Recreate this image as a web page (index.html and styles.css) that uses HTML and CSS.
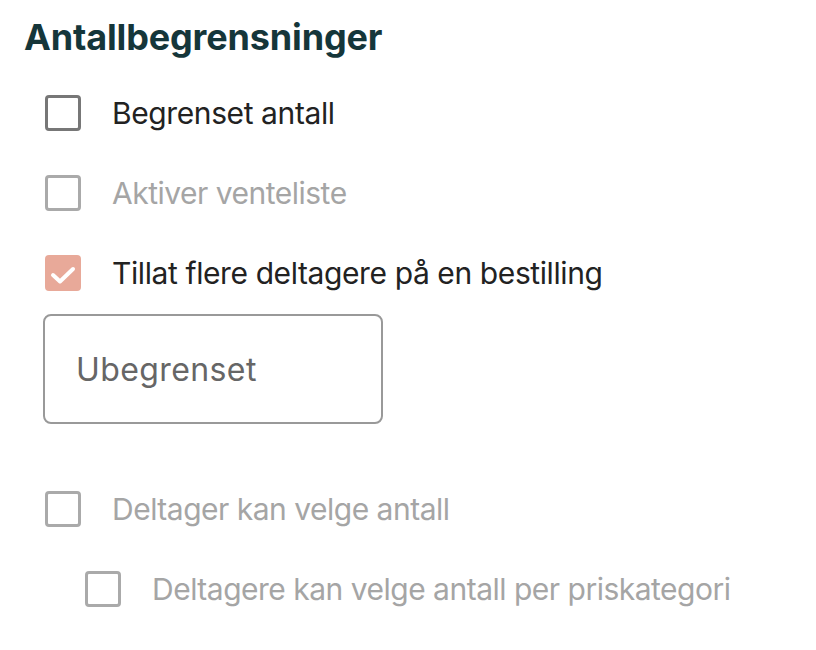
FILE: index.html
```html
<!DOCTYPE html>
<html lang="no">
  <head>
    <meta name="viewport" content="width=device-width, initial-scale=1" />
    <title>Antallbegrensninger</title>
    <link rel="stylesheet" href="styles.css">
  </head>
  <body>
    <section class="limits">
      <h2 class="limits-title">Antallbegrensninger</h2>

      <label class="check-row">
        <span class="check-box"></span>
        <span class="check-label">Begrenset antall</span>
      </label>

      <label class="check-row is-disabled">
        <span class="check-box"></span>
        <span class="check-label">Aktiver venteliste</span>
      </label>

      <label class="check-row">
        <span class="check-box is-checked">
          <svg viewBox="0 0 36 36" width="36" height="36">
            <path d="M8 20l7 6.5 13-12.5" fill="none" stroke="#fff" stroke-width="4" stroke-linecap="round" stroke-linejoin="round"/>
          </svg>
        </span>
        <span class="check-label">Tillat flere deltagere på en bestilling</span>
      </label>

      <div class="amount-field">
        <input class="amount-input" type="text" placeholder="Ubegrenset">
      </div>

      <label class="check-row is-disabled">
        <span class="check-box"></span>
        <span class="check-label">Deltager kan velge antall</span>
      </label>

      <label class="check-row is-disabled is-nested">
        <span class="check-box"></span>
        <span class="check-label">Deltagere kan velge antall per priskategori</span>
      </label>
    </section>
  </body>
</html>
```
FILE: styles.css
```css
body {
    margin: 0;
    font-family: Inter, "Noto Sans", sans-serif;
    background: #fff;
}
.limits {
    padding: 15px 24px;
    display: flex;
    flex-direction: column;
}
.limits-title {
    margin: 0 0 36px 0;
    font-size: 36px;
    font-weight: 700;
    color: #15363a;
    letter-spacing: -0.15px;
    line-height: 44px;
}
.check-row {
    display: flex;
    align-items: center;
    gap: 31px;
    height: 36px;
    margin: 0 0 44px 21px;
    cursor: pointer;
}
.check-box {
    box-sizing: border-box;
    width: 36px;
    height: 36px;
    flex: none;
    border: 3px solid #777;
    border-radius: 4px;
    display: flex;
}
.check-box.is-checked {
    border: 0;
    background: #e8a999;
}
.check-label {
    font-size: 30px;
    color: #222;
    letter-spacing: -0.4px;
}
.is-disabled .check-box {
    border-color: #aaa;
}
.is-disabled .check-label {
    color: #a5a5a5;
    letter-spacing: -0.5px;
}
.is-nested {
    margin-left: 61px;
}

.amount-field {
    margin: -21px 0 67px 19px;
}
.amount-input {
    box-sizing: border-box;
    width: 340px;
    height: 110px;
    padding: 0 31px;
    font-family: Inter, "Noto Sans", sans-serif;
    font-size: 32px;
    color: #555;
    border: 2px solid #999;
    border-radius: 8px;
    outline: 0;
}
.amount-input::placeholder {
    color: #666;
    letter-spacing: 0.4px;
}
```
